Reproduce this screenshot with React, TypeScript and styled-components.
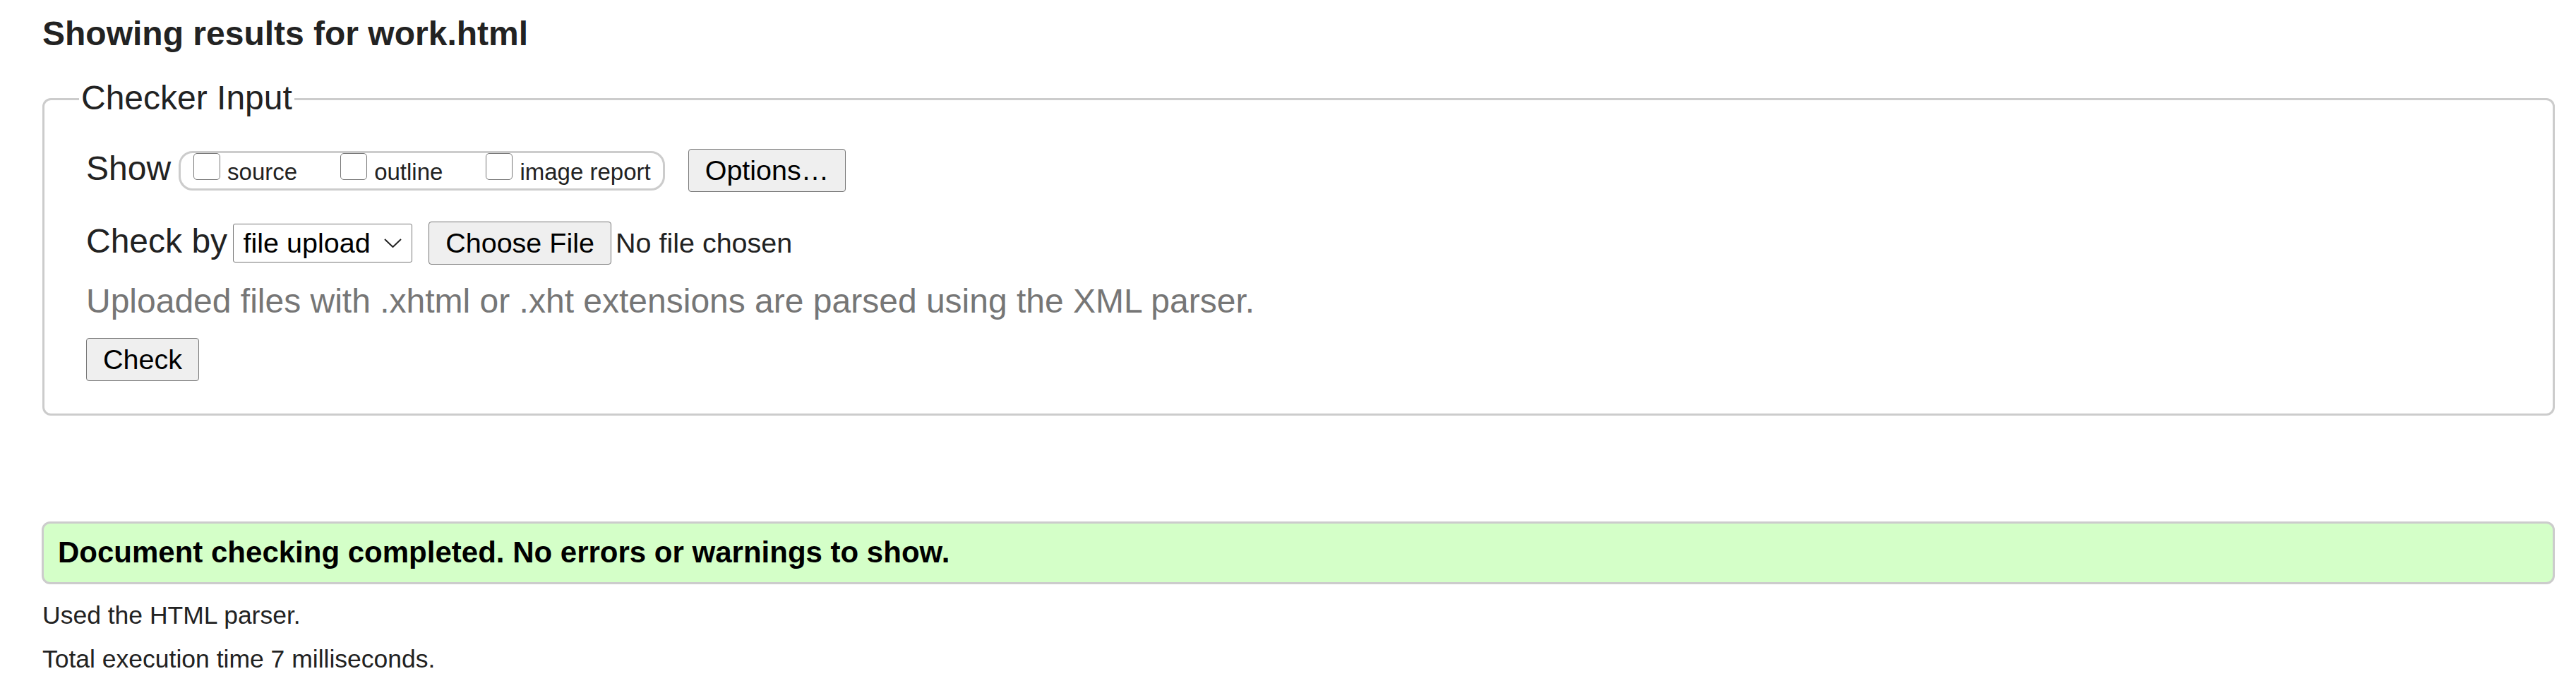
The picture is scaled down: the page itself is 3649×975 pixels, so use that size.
import styled, { createGlobalStyle } from "styled-components";

const GlobalStyle = createGlobalStyle`
  html, body {
    margin: 0;
    padding: 0;
    background: #fff;
  }
  body {
    font-family: "Liberation Sans", Arial, sans-serif;
    color: #222;
  }
`;

const Page = styled.main`
  padding: 20px 30px 0 60px;
`;

const Title = styled.h2`
  margin: 0 0 36px;
  font-size: 48px;
  line-height: 55px;
  font-weight: bold;
  color: #222;
`;

const Fieldset = styled.fieldset`
  margin: 0 0 150px;
  padding: 41px 30px 46px 59px;
  border: 3px solid #ccc;
  border-radius: 12px;
  min-width: 0;
`;

const Legend = styled.legend`
  margin-left: -10px;
  padding: 0 3px 4px;
  font-size: 48px;
  line-height: 55px;
  color: #222;
`;

const Row = styled.div<{ $top?: number }>`
  display: flex;
  align-items: baseline;
  margin-top: ${(p) => p.$top ?? 0}px;
`;

const FieldLabel = styled.span<{ $space: number }>`
  font-size: 48px;
  line-height: 55px;
  margin-right: ${(p) => p.$space}px;
`;

const Pill = styled.div`
  display: inline-flex;
  align-items: baseline;
  gap: 61px;
  padding: 0 17px 4px 18px;
  border: 3px solid #ccc;
  border-radius: 20px;
  margin-right: 33px;
`;

const CheckItem = styled.label`
  display: inline-flex;
  align-items: baseline;
  gap: 10px;
  font-size: 33px;
  line-height: 37.5px;
  color: #222;
`;

const Box = styled.input`
  appearance: none;
  -webkit-appearance: none;
  margin: 0;
  width: 38px;
  height: 38px;
  box-sizing: border-box;
  border: 1.5px solid #767676;
  border-radius: 5px;
  background: #fff;
`;

const Button = styled.button<{ $space?: number }>`
  font-family: inherit;
  font-size: 39.5px;
  line-height: 45px;
  padding: 7px 23px;
  border: 1.5px solid #767676;
  border-radius: 4px;
  background: #efefef;
  color: #000;
  margin: 0 ${(p) => p.$space ?? 0}px 0 0;
`;

const SelectBox = styled.div`
  display: inline-flex;
  align-items: center;
  gap: 19px;
  height: 55px;
  box-sizing: border-box;
  padding: 0 14.5px 0 13.5px;
  border: 1.5px solid #767676;
  border-radius: 3px;
  background: #fff;
  font-size: 39.5px;
  color: #000;
  margin-right: 23px;

  span {
    line-height: 45px;
  }
`;

const FileName = styled.span`
  font-size: 39.5px;
  line-height: 45px;
  color: #222;
`;

const Hint = styled.p`
  margin: 24px 0 25px;
  font-size: 48px;
  line-height: 55px;
  color: #767676;
`;

const Actions = styled.div`
  display: flex;
`;

const Success = styled.div`
  margin: 0 0 24px -1px;
  padding: 17px 20px 18px;
  border: 3px solid #ccc;
  border-radius: 12px;
  background: #d4ffc8;
  font-size: 42px;
  line-height: 48px;
  font-weight: bold;
  color: #000;
`;

const Note = styled.p`
  margin: 0 0 21px;
  font-size: 35.5px;
  line-height: 41px;
  color: #222;
`;

function Chevron() {
  return (
    <svg width="25" height="13" viewBox="0 0 25 13" aria-hidden="true">
      <polyline points="1,1 12.5,12 24,1" fill="none" stroke="#222" strokeWidth="2" />
    </svg>
  );
}

export default function App() {
  return (
    <>
      <GlobalStyle />
      <Page>
        <Title>Showing results for work.html</Title>
        <Fieldset>
          <Legend>Checker Input</Legend>
          <Row>
            <FieldLabel $space={11}>Show</FieldLabel>
            <Pill>
              <CheckItem>
                <Box type="checkbox" />
                source
              </CheckItem>
              <CheckItem>
                <Box type="checkbox" />
                outline
              </CheckItem>
              <CheckItem>
                <Box type="checkbox" />
                image report
              </CheckItem>
            </Pill>
            <Button type="button">Options…</Button>
          </Row>
          <Row $top={42}>
            <FieldLabel $space={8}>Check by</FieldLabel>
            <SelectBox>
              <span>file upload</span>
              <Chevron />
            </SelectBox>
            <Button type="button" $space={6}>Choose File</Button>
            <FileName>No file chosen</FileName>
          </Row>
          <Hint>Uploaded files with .xhtml or .xht extensions are parsed using the XML parser.</Hint>
          <Actions>
            <Button type="submit">Check</Button>
          </Actions>
        </Fieldset>
        <Success>Document checking completed. No errors or warnings to show.</Success>
        <Note>Used the HTML parser.</Note>
        <Note>Total execution time 7 milliseconds.</Note>
      </Page>
    </>
  );
}
